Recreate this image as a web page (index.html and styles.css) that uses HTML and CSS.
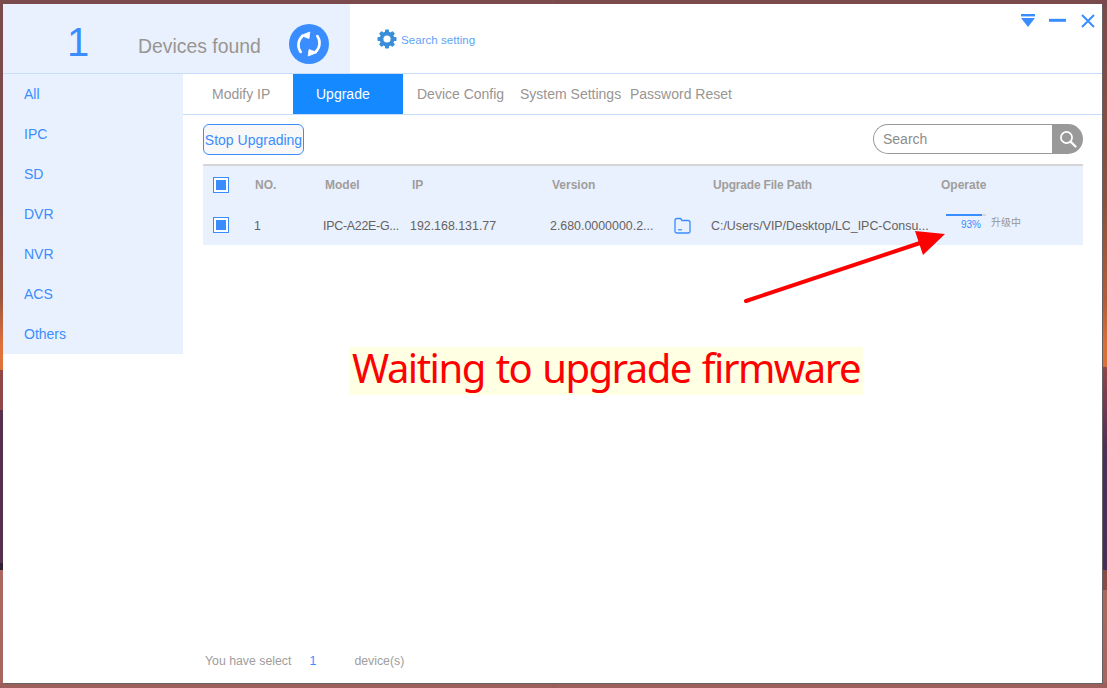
FILE: index.html
```html
<!DOCTYPE html>
<html lang="en">
<head>
<meta charset="utf-8">
<title>Device upgrade</title>
<link rel="stylesheet" href="styles.css">
</head>
<body>
<div class="window">
  <header class="head">
    <div class="found">
      <span class="count">1</span>
      <span class="found-label">Devices found</span>
      <svg class="refresh" width="40" height="40" viewBox="0 0 40 40">
        <circle cx="20" cy="20" r="20" fill="#3a8dff"/>
        <g>
          <path d="M11.7 28A12 12 0 0 1 13.5 12" fill="none" stroke="#fff" stroke-width="2.6" stroke-linecap="round"/>
          <path d="M12 11.5L20.8 8L20 14.5Z" fill="#fff" stroke="#fff" stroke-width="0.8" stroke-linejoin="round"/>
        </g>
        <g transform="rotate(180 20 20)">
          <path d="M11.7 28A12 12 0 0 1 13.5 12" fill="none" stroke="#fff" stroke-width="2.6" stroke-linecap="round"/>
          <path d="M12 11.5L20.8 8L20 14.5Z" fill="#fff" stroke="#fff" stroke-width="0.8" stroke-linejoin="round"/>
        </g>
      </svg>
    </div>
    <div class="setting">
      <svg class="gear" width="20" height="20" viewBox="0 0 20 20">
        <g fill="#3a8dd8">
          <circle cx="10" cy="10" r="7.4"/>
          <rect x="8" y="0.5" width="4" height="19" rx="0.8"/>
          <rect x="8" y="0.5" width="4" height="19" rx="0.8" transform="rotate(45 10 10)"/>
          <rect x="8" y="0.5" width="4" height="19" rx="0.8" transform="rotate(90 10 10)"/>
          <rect x="8" y="0.5" width="4" height="19" rx="0.8" transform="rotate(135 10 10)"/>
        </g>
        <circle cx="10" cy="10" r="3.6" fill="#fff"/>
      </svg>
      <span>Search setting</span>
    </div>
    <div class="win-controls">
      <svg width="14" height="14" viewBox="0 0 14 14"><rect y="0" width="14" height="2.4" fill="#3a8dff"/><path d="M0 4H14L7 13Z" fill="#3a8dff"/></svg>
      <svg width="18" height="14" viewBox="0 0 18 14"><rect x="0" y="4.8" width="17" height="3" fill="#3a8dff"/></svg>
      <svg width="14" height="14" viewBox="0 0 14 14"><path d="M1 1L13 13M13 1L1 13" stroke="#3a8dff" stroke-width="2" fill="none"/></svg>
    </div>
  </header>
  <div class="body">
    <nav class="side">
      <a>All</a><a>IPC</a><a>SD</a><a>DVR</a><a>NVR</a><a>ACS</a><a>Others</a>
    </nav>
    <main class="content">
      <div class="tabs">
        <a class="tab tab-modify">Modify IP</a>
        <a class="tab tab-active">Upgrade</a>
        <a class="tab tab-config">Device Config</a>
        <a class="tab tab-system">System Settings</a>
        <a class="tab tab-password">Password Reset</a>
      </div>
      <div class="pane">
        <div class="toolbar">
          <button class="stop">Stop Upgrading</button>
          <div class="search">
            <span class="search-input">Search</span>
            <span class="search-btn">
              <svg width="18" height="18" viewBox="0 0 18 18"><circle cx="7.5" cy="7.5" r="5.6" fill="none" stroke="#fff" stroke-width="1.7"/><path d="M11.6 11.6L16.5 16.5" stroke="#fff" stroke-width="2.2" stroke-linecap="round"/></svg>
            </span>
          </div>
        </div>
        <div class="table">
          <div class="row row-head">
            <span class="check"><i></i></span>
            <span>NO.</span><span>Model</span><span>IP</span><span>Version</span><span class="path-head">Upgrade File Path</span><span>Operate</span>
          </div>
          <div class="row row-body">
            <span class="check"><i></i></span>
            <span class="cell cell-no">1</span>
            <span class="cell cell-model">IPC-A22E-G...</span>
            <span class="cell">192.168.131.77</span>
            <span class="cell version">2.680.0000000.2...
              <svg class="folder" width="17" height="17" viewBox="0 0 17 17"><path d="M1 3.5Q1 1.5 3 1.5H6.5L8 3.5H14Q16 3.5 16 5.5V14Q16 16 14 16H3Q1 16 1 14Z" fill="none" stroke="#3a8dff" stroke-width="1.3"/><path d="M4 12.8H8" stroke="#3a8dff" stroke-width="1.2"/></svg>
            </span>
            <span class="cell">C:/Users/VIP/Desktop/LC_IPC-Consu...</span>
            <span class="operate">
              <span class="progress"><span class="bar"><i class="fill"></i></span><em>93%</em></span>
              <span class="state">升级中</span>
            </span>
          </div>
        </div>
        <div class="spacer"></div>
        <footer class="foot"><span>You have select</span><b>1</b><span>device(s)</span></footer>
      </div>
    </main>
  </div>
  <svg class="arrow" width="220" height="90" viewBox="0 0 220 90">
    <path d="M3 70L180 11" stroke="#fe0000" stroke-width="4" stroke-linecap="round"/>
    <path d="M202 3L172 0L180 24Z" fill="#fe0000"/>
  </svg>
  <div class="note">Waiting to upgrade firmware</div>
</div>
</body>
</html>
```

FILE: styles.css
```css
* { box-sizing: border-box; }
html, body { margin: 0; height: 688px; overflow: hidden; }
body {
  background-color: #8f5553;
  background-image:
    linear-gradient(#7a4a4c 0, #7e4b4a 200px, #a05640 300px, #e0713a 345px, #e0713a 370px, #8f4748 370px, #8f4748 410px, #55304f 410px, #55304f 563px, #2f2238 563px, #2f2238 570px, #ab6860 570px, #a8645f 683px, #9c5f5c 683px),
    linear-gradient(#7a4a4c 0, #8c5040 200px, #b45c3a 300px, #dc6f38 345px, #dc6f38 367px, #8f4748 367px, #7a3a50 400px, #4e2f55 450px, #4a2d55 570px, #8a4a45 570px, #8a4a45 590px, #ab6860 590px, #a8645f 683px, #9c5f5c 683px);
  background-size: 50% 100%, 50% 100%;
  background-position: left top, right top;
  background-repeat: no-repeat;
  font-family: "Liberation Sans", Arial, sans-serif;
  padding: 4px 5px 5px 3px;
}
.window {
  position: relative;
  width: 1099px;
  height: 679px;
  background: #fff;
  box-shadow: 1px 1px 0 #66605f;
  display: flex;
  flex-direction: column;
}
.head {
  height: 70px;
  flex: none;
  display: flex;
  border-bottom: 1px solid #c5dcfb;
}
.found {
  width: 347px;
  background: #e9f1fe;
  display: flex;
  align-items: center;
  padding-left: 64px;
}
.count { font-size: 40px; font-weight: normal; color: #3a8dff; line-height: 1; width: 71px; margin-top: 7px; }
.found-label { font-size: 19.4px; color: #999592; width: 151px; margin-top: 15px; }
.refresh { margin-top: 11px; }
.setting {
  display: flex;
  align-items: center;
  gap: 4px;
  padding-left: 27px;
  margin-top: 2px;
  color: #5fa3f5;
  font-size: 11.6px;
}
.gear { margin-top: -1px; }
.win-controls {
  margin-left: auto;
  display: flex;
  align-items: flex-start;
  gap: 14px;
  padding: 10px 7px 0 0;
}
.body { flex: 1; display: flex; min-height: 0; }
.side {
  width: 180px;
  height: 280px;
  flex: none;
  background: #e9f1fe;
}
.side a {
  display: flex;
  align-items: center;
  height: 40px;
  padding-left: 21px;
  color: #3a8dff;
  font-size: 14px;
}
.content { flex: 1; display: flex; flex-direction: column; min-width: 0; }
.tabs {
  height: 41px;
  flex: none;
  display: flex;
  border-bottom: 1px solid #c5dcfb;
}
.tab {
  display: flex;
  align-items: center;
  height: 40px;
  color: #999592;
  font-size: 14px;
  white-space: nowrap;
}
.tab-modify { width: 110px; padding-left: 29px; }
.tab-active { width: 110px; padding-left: 23px; background: #1589ff; color: #fff; }
.tab-config { width: 117px; padding-left: 14px; }
.tab-system { width: 110px; }
.tab-password { padding-left: 0; }
.pane { flex: 1; display: flex; flex-direction: column; padding: 9px 19px 0 20px; min-height: 0; }
.toolbar { display: flex; justify-content: space-between; align-items: flex-start; height: 40px; flex: none; }
.stop {
  width: 101px;
  height: 31px;
  padding: 0;
  background: #f8f8f8;
  border: 1px solid #3a8dff;
  border-radius: 6px;
  color: #3a8dff;
  font: 14px "Liberation Sans", Arial, sans-serif;
  white-space: nowrap;
}
.search { display: flex; width: 210px; height: 30px; }
.search-input {
  flex: 1;
  border: 1px solid #999;
  border-right: 0;
  border-radius: 15px 0 0 15px;
  color: #8c8c8c;
  font-size: 14px;
  line-height: 28px;
  padding-left: 9px;
}
.search-btn {
  width: 31px;
  background: #999;
  border-radius: 0 15px 15px 0;
  display: flex;
  align-items: center;
  justify-content: center;
}
.table { border-top: 2px solid #d5d5d5; background: #e9f1fe; flex: none; }
.row {
  display: grid;
  grid-template-columns: 50px 70px 87px 140px 161px 228px 144px;
  align-items: center;
  height: 40px;
  white-space: nowrap;
}
.row-head { height: 39px; font-size: 12px; font-weight: bold; color: #a09d9b; }
.row-head > span:not(.check) { padding-left: 2px; margin-top: -2px; }
.row-head .check { margin-top: -2px; }
.path-head { letter-spacing: -0.18px; }
.row-body { font-size: 12.4px; color: #66625f; height: 40px; }
.cell { margin-top: 2px; }
.cell-no { padding-left: 1px; }
.cell-model { letter-spacing: -0.25px; }
.check {
  display: block;
  width: 16px;
  height: 16px;
  margin-left: 10px;
  border: 1px solid #3a8dff;
  padding: 2px;
  background: #fff;
}
.check i { display: block; width: 10px; height: 10px; background: #3a8dff; }
.version { position: relative; }
.folder { position: absolute; left: 124px; top: -2px; }
.operate { display: flex; align-items: flex-start; margin-top: -6px; padding-left: 7px; }
.progress { display: block; width: 40px; }
.bar { display: block; height: 2px; background: #d9d9d9; }
.fill { display: block; width: 36px; height: 2px; background: #3a8dff; }
.progress em { display: block; font-style: normal; font-size: 10px; line-height: 12px; color: #3a8dff; text-align: right; padding: 3px 5px 0 0; }
.state { font: 10px "Noto Sans CJK SC", sans-serif; color: #999592; margin: 0 0 0 5px; line-height: 12px; padding-top: 2px; }
.spacer { flex: 1; }
.foot {
  height: 52px;
  flex: none;
  display: flex;
  align-items: flex-start;
  padding: 23px 0 0 2px;
  font-size: 12.3px;
  color: #a09d9b;
}
.foot b { font-weight: normal; color: #3a8dff; width: 45px; margin-left: 18px; }
.arrow { position: absolute; left: 740px; top: 227px; }
.note {
  position: absolute;
  left: 346px;
  top: 343px;
  width: 514px;
  height: 48px;
  background: #ffffe3;
  color: #fe0000;
  font: 40px/42px "Noto Sans", sans-serif;
  letter-spacing: -1.5px;
  word-spacing: 2px;
  text-align: center;
  white-space: nowrap;
}
```
